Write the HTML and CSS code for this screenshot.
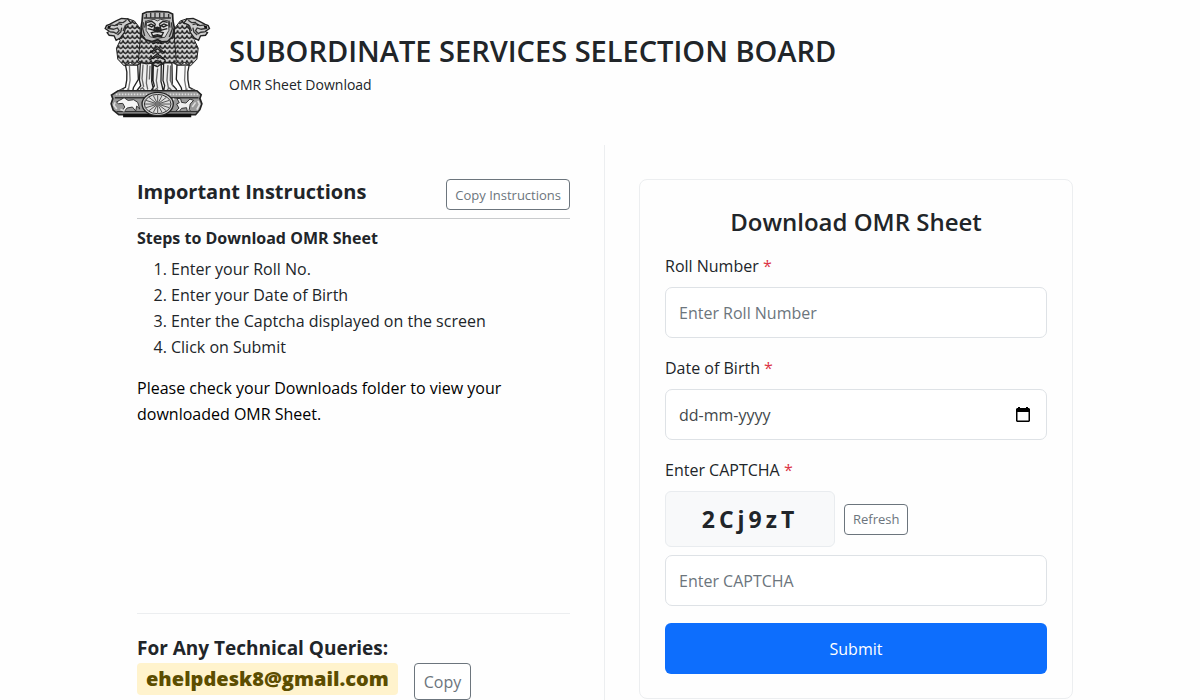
FILE: index.html
```html
<!DOCTYPE html>
<html lang="en">
    <head>
        <meta charset="UTF-8" />
        <meta name="viewport" content="width=device-width, initial-scale=1.0" />
        <title>OMR Sheet Download</title>
        <link rel="stylesheet" href="styles.css">
    </head>
    <body>
        <header class="site-header">
            <svg class="emblem" viewBox="40 30 320 328" role="img" aria-label="State Emblem">
                <defs>
                    <pattern id="mane" width="14" height="15" patternUnits="userSpaceOnUse">
                        <rect width="14" height="15" fill="#d4d4d4" />
                        <path d="M0 1q1 7 7 10q6-3 7-10" fill="none" stroke="#1c1c1c" stroke-width="4" />
                    </pattern>
                </defs>
                <!-- side lions -->
                <g id="sideLion">
                    <path d="M111 56l21 7 17 22 4 105-17 8-16-10-19 10-19-20-4-33 11-23-8-14z" fill="url(#mane)" stroke="#222" stroke-width="3" />
                    <path d="M57 73l20-10 16-8 19 2 9 12-14 6-5 22-12 17-13 7-6-13-15-2-6-8 6-4-12-8 4-9z" fill="#ccc" stroke="#222" stroke-width="4" />
                    <path d="M58 75l15 2 10-6 12 3M51 85l18 3 12-4 5 8-7 8M58 96l12 1 9 5M84 67l14 1 10-7M94 83l-3 13-10 9M105 76l-7 17" fill="none" stroke="#333" stroke-width="4" />
                    <path d="M52 78l10-1-3 7-8 1zM74 75l10-2-3 5z" fill="#111" />
                    <path d="M105 195q7 22 4 45l-4 23-18 9v7h39l3-15 15-25-2-43z" fill="#fcfcfc" stroke="#222" stroke-width="4" />
                    <path d="M117 198l2 43-5 29M89 272l9-3 6 7M110 267l9 7" fill="none" stroke="#777" stroke-width="4" />
                </g>
                <use href="#sideLion" transform="translate(402) scale(-1 1)" />
                <!-- front lion -->
                <path d="M151 98l-7 85 20 9 17-1 20 12 20-12 17 1 20-9-7-85z" fill="url(#mane)" stroke="#222" stroke-width="3" />
                <path d="M201 117l-14 15 14-5 14 5zM201 139l-22 20 22-11 22 11zM201 161l-24 19 24-10 24 10zM201 181l-15 9 15-2 15 2z" fill="#555" stroke="#111" stroke-width="3" />
                <path d="M157 41l12-5 31-2 34 2 13 6 1 21 4 20-5 27-15 14-17 2-13-7-17 6-19-5-13-16-1-22 3-18z" fill="#bbb" stroke="#222" stroke-width="5" />
                <path d="M160 54h82M168 41v12M181 38v15M194 38v15M208 38v15M221 38v15M235 42v11M159 67l-2 20 6 21M243 67l3 20-9 24M167 62l-4 21M236 62l3 21" fill="none" stroke="#333" stroke-width="4" />
                <path d="M169 63l22-5 10 5 10-5 23 5 2 28-12 21-22 3-22-4-13-20z" fill="#ddd" stroke="#444" stroke-width="3" />
                <path d="M170 67l14-3 11 8M207 72l11-8 14 3M174 76l8-4 9 5-7 4zM212 77l9-5 9 4-10 5zM195 72l-4 16 10 5 11-5-5-16M172 86l15 4 14 6 15-6 15-4M183 98l18-4 18 4-5 10-13-4-14 4zM188 112l13-3 15 3" fill="none" stroke="#222" stroke-width="4" />
                <path d="M192 83l9-3 10 3-5 8h-9z" fill="#222" />
                <path d="M150 188l-3 53 4 17-12 15v7h48l1-17-4-17 1-56-16 2zM189 195l-1 47 4 16-10 15v8h38l-4-20-4-16 1-53-12 9zM220 190l-2 52 5 15-3 16 2 7h39l-3-12-12-13-1-65-12-2z" fill="#eee" stroke="#222" stroke-width="4" />
                <path d="M158 194l-3 43 5 24M171 195l-3 55 4 18M179 198l-2 41M202 206l-4 37 4 23M233 196l-3 46 5 25M241 197l-1 45 8 17M149 269l8-5 8 12M170 270l7 6M191 272l8-6 7 11M230 270l8-5 9 11" fill="none" stroke="#666" stroke-width="4" />
                <!-- abacus and wheel -->
                <path d="M83 273h237l13 12-4 11 6 16-6 18-13 15H85l-17-14-6-19 5-15-4-11z" fill="#999" stroke="#222" stroke-width="5" />
                <path d="M76 284h249" stroke="#ddd" stroke-width="5" stroke-dasharray="5 4" />
                <path d="M73 294h252M78 336h247" stroke="#333" stroke-width="4" />
                <path d="M98 342h205v11H98z" fill="#111" />
                <path d="M87 302l14-8 12 8 17-2 12 8 6 20-9-9-3 15-10-12-16 3-9 11-5-4 7-10-6-11-13 1-6-5z" fill="#f5f5f5" stroke="#333" stroke-width="3" />
                <path d="M260 296l11 1 3 11 13 2 12-12 11 4-10 11-3 17 5 5-11-1-2-10-15 2-7 9-10-1 9-9-7-12 8-4z" fill="#eee" stroke="#333" stroke-width="3" />
                <path d="M74 308l-4 8 9 12M323 303l5 11-8 16M90 329l12 5M243 303l9-6M306 322l10-14" fill="none" stroke="#ddd" stroke-width="5" />
                <ellipse cx="202" cy="313" rx="47" ry="35" fill="#ccc" stroke="#222" stroke-width="4" />
                <ellipse cx="202" cy="313" rx="40" ry="29" fill="#ddd" stroke="#333" stroke-width="3" />
                <path d="M164 313h76M202 286v54M167 302l70 22M167 324l70-22M176 293l52 40M176 333l52-40M189 288l26 50M189 338l26-50" stroke="#555" stroke-width="3" />
                <circle cx="202" cy="313" r="7" fill="#777" />
            </svg>
            <div>
                <h1 class="site-title">SUBORDINATE SERVICES SELECTION BOARD</h1>
                <p class="site-subtitle">OMR Sheet Download</p>
            </div>
        </header>

        <main class="columns">
            <section class="instructions">
                <div class="section-head">
                    <h2>Important Instructions</h2>
                    <button type="button" class="btn-outline">Copy Instructions</button>
                </div>
                <h3>Steps to Download OMR Sheet</h3>
                <ol>
                    <li>Enter your Roll No.</li>
                    <li>Enter your Date of Birth</li>
                    <li>Enter the Captcha displayed on the screen</li>
                    <li>Click on Submit</li>
                </ol>
                <p class="note">Please check your Downloads folder to view your downloaded OMR Sheet.</p>

                <div class="support">
                    <h2>For Any Technical Queries:</h2>
                    <div class="support-row">
                        <a class="email" href="mailto:ehelpdesk8@gmail.com">ehelpdesk8@gmail.com</a>
                        <button type="button" class="btn-outline btn-copy">Copy</button>
                    </div>
                </div>
            </section>

            <section class="form-column">
                <form class="card">
                    <h2>Download OMR Sheet</h2>

                    <div class="field">
                        <label for="rollNumber">Roll Number <span class="required">*</span></label>
                        <input type="text" id="rollNumber" placeholder="Enter Roll Number">
                    </div>

                    <div class="field">
                        <label for="dob">Date of Birth <span class="required">*</span></label>
                        <div class="date-box">
                            <input type="text" id="dob" placeholder="dd-mm-yyyy">
                            <button type="button" class="date-button" aria-label="Open calendar">
                                <svg viewBox="0 0 16 16" width="16" height="16">
                                    <path d="M2 2h1V1h2v1h6V1h2v1h1l1 1v12l-1 1H2l-1-1V3zM2.5 6v8.5h11V6z" fill="#000" fill-rule="evenodd" />
                                </svg>
                            </button>
                        </div>
                    </div>

                    <div class="field">
                        <label for="captcha">Enter CAPTCHA <span class="required">*</span></label>
                        <div class="captcha-row">
                            <div class="captcha-code">2Cj9zT</div>
                            <button type="button" class="btn-outline">Refresh</button>
                        </div>
                        <input type="text" id="captcha" placeholder="Enter CAPTCHA">
                    </div>

                    <button type="submit" class="btn-submit">Submit</button>
                </form>
            </section>
        </main>
    </body>
</html>
```
FILE: styles.css
```css
* {
    box-sizing: border-box;
}

body {
    display: flex;
    flex-direction: column;
    min-height: 100vh;
    margin: 0;
    padding: 0 93px 0 103px;
    font-family: "Open Sans", "Segoe UI", sans-serif;
    font-size: 16px;
    line-height: 26px;
    color: #212529;
    background-color: #fefefe;
}

h1,
h2,
h3,
p,
ol {
    margin: 0;
}

input,
button {
    font-family: inherit;
    font-size: 16px;
}

.site-header {
    display: flex;
    gap: 18px;
    padding: 10px 0 26px;
}

.emblem {
    width: 108px;
    height: 109px;
}

.site-title {
    margin-top: 22px;
    font-size: 29px;
    font-weight: 600;
    line-height: 38px;
}

.site-subtitle {
    font-size: 14px;
    line-height: 30px;
}

.columns {
    flex: 1;
    display: grid;
    grid-template-columns: 1fr 1fr;
}

.instructions {
    display: flex;
    flex-direction: column;
    padding: 34px 34px 0;
    border-right: 1px solid #eceef0;
}

.section-head {
    display: flex;
    justify-content: space-between;
    align-items: flex-start;
    padding-bottom: 8px;
    border-bottom: 1px solid #c8cacc;
}

.instructions h2 {
    font-size: 20px;
    font-weight: 700;
}

.instructions h3 {
    margin: 6px 0 5px;
    font-size: 16px;
    font-weight: 700;
}

.instructions ol {
    padding-left: 34px;
}

.note {
    margin-top: 15px;
    color: #000;
}

.btn-outline {
    padding: 0 8px;
    height: 31px;
    font-size: 13px;
    color: #6c757d;
    background-color: #fff;
    border: 1px solid #6c757d;
    border-radius: 4px;
    cursor: pointer;
}

.support {
    margin-top: auto;
    padding-top: 21px;
    border-top: 1px solid #eceef0;
}

.support h2 {
    margin-bottom: 2px;
    font-size: 19px;
}

.support-row {
    display: flex;
    gap: 16px;
}

.email {
    align-self: flex-start;
    padding: 2px 9px;
    font-size: 20px;
    font-weight: 800;
    line-height: 28px;
    color: #5c4d00;
    text-decoration: none;
    background-color: #fff3cd;
    border-radius: 4px;
}

.btn-copy {
    height: 37px;
    padding: 0 9px;
    font-size: 16px;
}

.form-column {
    padding: 34px 34px 0;
}

.card {
    padding: 23px 25px 24px;
    border: 1px solid #eceef0;
    border-radius: 8px;
}

.card h2 {
    margin-bottom: 12px;
    font-size: 24px;
    font-weight: 600;
    line-height: 38px;
    text-align: center;
}

.field {
    margin-bottom: 17px;
}

.field label {
    display: block;
    margin-bottom: 8px;
}

.required {
    color: #dc3545;
}

.field input {
    display: block;
    width: 100%;
    height: 51px;
    padding: 0 13px;
    color: #212529;
    background-color: #fff;
    border: 1px solid #dee2e6;
    border-radius: 7px;
}

.field input::placeholder {
    color: #6c757d;
}

.date-box {
    position: relative;
}

.field #dob::placeholder {
    color: #43474b;
}

.date-button {
    position: absolute;
    top: 17px;
    right: 16px;
    padding: 0;
    line-height: 0;
    background: none;
    border: none;
    cursor: pointer;
}

.captcha-row {
    display: flex;
    align-items: center;
    gap: 9px;
    margin-bottom: 8px;
}

.captcha-code {
    min-width: 170px;
    padding: 13px 0 12px;
    font-size: 23px;
    font-weight: 700;
    line-height: 29px;
    letter-spacing: 4px;
    text-align: center;
    background-color: #f8f9fa;
    border: 1px solid #e9ecef;
    border-radius: 6px;
}

.btn-submit {
    width: 100%;
    height: 51px;
    color: #fff;
    background-color: #0d6efd;
    border: none;
    border-radius: 6px;
    cursor: pointer;
}
```
